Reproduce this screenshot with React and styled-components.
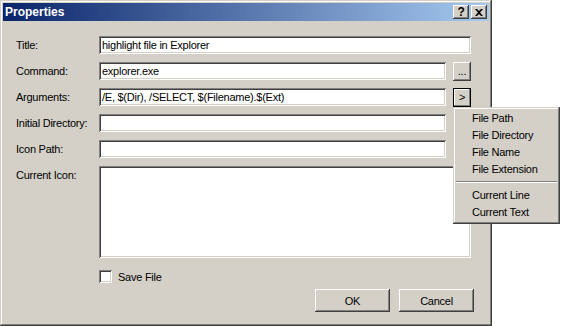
import React from 'react';
import styled, { createGlobalStyle } from 'styled-components';

const GlobalStyle = createGlobalStyle`
    html, body {
        margin: 0;
        padding: 0;
        background: #ffffff;
    }
    * {
        box-sizing: border-box;
    }
`;

const Page = styled.div`
    position: relative;
    width: 563px;
    height: 326px;
    font-family: "Liberation Sans", Arial, sans-serif;
    font-size: 11px;
    letter-spacing: -0.25px;
    color: #000000;
`;

const Window = styled.div`
    width: 492px;
    height: 326px;
    padding: 3px;
    background: #d4d0c8;
    box-shadow: inset -1px -1px #404040, inset 1px 1px #d4d0c8,
        inset -2px -2px #808080, inset 2px 2px #ffffff;
    display: flex;
    flex-direction: column;
`;

const TitleBar = styled.div`
    height: 18px;
    display: flex;
    align-items: center;
    padding: 0 2px 0 2px;
    background: linear-gradient(to right, #0a246a, #a6caf0);
`;

const Caption = styled.div`
    flex: 1;
    color: #ffffff;
    font-weight: bold;
    font-size: 12px;
    letter-spacing: 0;
`;

const CaptionButton = styled.div`
    width: 16px;
    height: 14px;
    margin-left: ${(p) => (p.gap ? '2px' : '0')};
    background: #d4d0c8;
    box-shadow: inset -1px -1px #404040, inset 1px 1px #ffffff,
        inset -2px -2px #808080, inset 2px 2px #d4d0c8;
    display: flex;
    align-items: center;
    justify-content: center;
    font-weight: bold;
    font-size: 12px;
    line-height: 1;
`;

const Body = styled.div`
    flex: 1;
    padding: 15px 15px 0 13px;
    display: flex;
    flex-direction: column;
`;

const Fields = styled.div`
    display: flex;
    flex-direction: column;
    gap: 8px;
    padding-right: 3px;
`;

const Row = styled.div`
    display: flex;
    align-items: ${(p) => (p.top ? 'flex-start' : 'center')};
    height: ${(p) => p.h || 18}px;
`;

const Label = styled.div`
    width: 83px;
    line-height: 18px;
    white-space: nowrap;
`;

const Edit = styled.div`
    flex: 1;
    height: ${(p) => p.h || 18}px;
    background: #ffffff;
    box-shadow: inset 1px 1px #808080, inset -1px -1px #ffffff,
        inset 2px 2px #404040, inset -2px -2px #d4d0c8;
    padding: 0 3px;
    line-height: 18px;
    white-space: nowrap;
    overflow: hidden;
`;

const SmallButton = styled.div`
    width: 18px;
    height: 19px;
    margin-left: 7px;
    background: #d4d0c8;
    border: ${(p) => (p.active ? '1px solid #000000' : 'none')};
    box-shadow: ${(p) =>
        p.active
            ? 'inset -1px -1px #808080, inset 1px 1px #ffffff'
            : 'inset -1px -1px #404040, inset 1px 1px #ffffff, inset -2px -2px #808080'};
    visibility: ${(p) => (p.hidden ? 'hidden' : 'visible')};
    display: flex;
    align-items: center;
    justify-content: center;
    font-size: 11px;
    line-height: 1;
`;

const CheckRow = styled.div`
    display: flex;
    align-items: center;
    margin-top: 12px;
    margin-left: 83px;
    height: 13px;
    gap: 6px;
`;

const CheckBox = styled.div`
    width: 13px;
    height: 13px;
    background: #ffffff;
    box-shadow: inset 1px 1px #808080, inset -1px -1px #ffffff,
        inset 2px 2px #404040, inset -2px -2px #d4d0c8;
`;

const ButtonRow = styled.div`
    display: flex;
    justify-content: flex-end;
    gap: 9px;
    margin-top: 6px;
`;

const PushButton = styled.div`
    width: 75px;
    height: 23px;
    background: #d4d0c8;
    box-shadow: inset -1px -1px #404040, inset 1px 1px #ffffff,
        inset -2px -2px #808080, inset 2px 2px #d4d0c8;
    display: flex;
    align-items: center;
    justify-content: center;
`;

const Menu = styled.div`
    position: absolute;
    left: 453px;
    top: 107px;
    width: 107px;
    padding: 3px;
    background: #d4d0c8;
    box-shadow: inset -1px -1px #404040, inset 1px 1px #d4d0c8,
        inset -2px -2px #808080, inset 2px 2px #ffffff;
`;

const MenuItem = styled.div`
    height: 17px;
    line-height: 17px;
    padding-left: 16px;
    white-space: nowrap;
`;

const Separator = styled.div`
    height: 2px;
    margin: 3px 0 4px;
    border-top: 1px solid #808080;
    border-bottom: 1px solid #ffffff;
`;

const fields = [
    { label: 'Title:', value: 'highlight file in Explorer' },
    { label: 'Command:', value: 'explorer.exe', button: '...' },
    { label: 'Arguments:', value: '/E, $(Dir), /SELECT, $(Filename).$(Ext)', button: '>', active: true },
    { label: 'Initial Directory:', value: '', spacer: true },
    { label: 'Icon Path:', value: '', spacer: true },
];

const App = () => {
    return (
        <Page>
            <GlobalStyle />
            <Window>
                <TitleBar>
                    <Caption>Properties</Caption>
                    <CaptionButton>?</CaptionButton>
                    <CaptionButton gap>
                        <svg width="8" height="7" viewBox="0 0 8 7">
                            <path d="M0 0h2l2 2 2-2h2L5 3.5 8 7H6L4 5 2 7H0l3-3.5z" fill="#000" />
                        </svg>
                    </CaptionButton>
                </TitleBar>
                <Body>
                    <Fields>
                        {fields.map((f) => (
                            <Row key={f.label}>
                                <Label>{f.label}</Label>
                                <Edit>{f.value}</Edit>
                                {f.button && <SmallButton active={f.active}>{f.button}</SmallButton>}
                                {f.spacer && <SmallButton hidden />}
                            </Row>
                        ))}
                        <Row top h={92}>
                            <Label>Current Icon:</Label>
                            <Edit h={92} />
                        </Row>
                    </Fields>
                    <CheckRow>
                        <CheckBox />
                        <span>Save File</span>
                    </CheckRow>
                    <ButtonRow>
                        <PushButton>OK</PushButton>
                        <PushButton>Cancel</PushButton>
                    </ButtonRow>
                </Body>
            </Window>
            <Menu>
                <MenuItem>File Path</MenuItem>
                <MenuItem>File Directory</MenuItem>
                <MenuItem>File Name</MenuItem>
                <MenuItem>File Extension</MenuItem>
                <Separator />
                <MenuItem>Current Line</MenuItem>
                <MenuItem>Current Text</MenuItem>
            </Menu>
        </Page>
    );
};

export default App;
